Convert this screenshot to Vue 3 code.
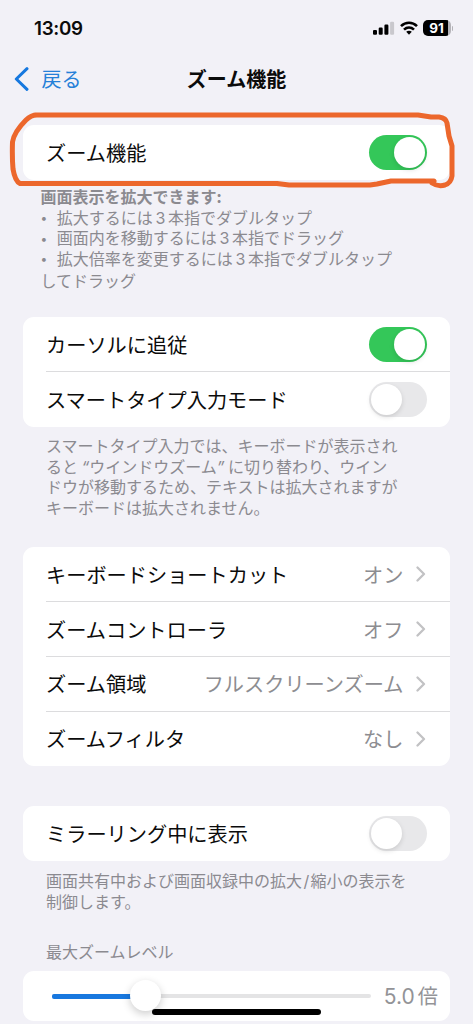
<script setup>
const shortcuts = [
  { label: 'キーボードショートカット', value: 'オン' },
  { label: 'ズームコントローラ', value: 'オフ' },
  { label: 'ズーム領域', value: 'フルスクリーンズーム' },
  { label: 'ズームフィルタ', value: 'なし' },
]
const follow = [
  { label: 'カーソルに追従', on: true },
  { label: 'スマートタイプ入力モード', on: false },
]
const tips = [
  ['拡大するには', '本指でダブルタップ'],
  ['画面内を移動するには', '本指でドラッグ'],
  ['拡大倍率を変更するには', '本指でダブルタップ'],
]
</script>

<template>
  <div class="screen">
    <header class="status">
      <span class="time">13:09</span>
      <div class="indicators">
        <svg class="signal" width="22" height="14" viewBox="0 0 22 14">
          <rect x="0" y="9" width="4" height="4.8" rx="1.1" />
          <rect x="5.7" y="6.6" width="4" height="7.2" rx="1.1" />
          <rect x="11.4" y="3.6" width="4" height="10.2" rx="1.1" />
          <rect x="17.1" y="0.8" width="4" height="13" rx="1.1" fill="#c9c8cd" />
        </svg>
        <svg class="wifi" width="18" height="14" viewBox="0 0 18 14">
          <g fill="none" stroke="#000" stroke-width="2.6">
            <path d="M1 5.1C5.6.7 12.4.7 17 5.1" />
            <path d="M4 8.6C6.9 5.9 11.1 5.9 14 8.6" />
          </g>
          <path d="M6.2 10.8C7.8 9.4 10.2 9.4 11.8 10.8L9 13.8Z" />
        </svg>
        <div class="battery"><span class="level">91</span><i class="cap"></i></div>
      </div>
    </header>

    <nav class="nav">
      <div class="back">
        <svg width="15" height="24" viewBox="0 0 15 24">
          <path d="M13 1.7L2.3 12L13 22.3" fill="none" stroke="#1678df" stroke-width="3" stroke-linecap="round" stroke-linejoin="round" />
        </svg>
        <span>戻る</span>
      </div>
      <h1>ズーム機能</h1>
    </nav>

    <section class="card master">
      <div class="row"><span>ズーム機能</span><i class="switch on"></i></div>
    </section>
    <div class="note tips">
      <b>画面表示を拡大できます:</b>
      <p v-for="tip in tips" :key="tip[0]"><span class="dot">•</span>{{ tip[0] }}<span class="num">3</span>{{ tip[1] }}</p>
      <p>してドラッグ</p>
    </div>

    <section class="card follow">
      <div v-for="item in follow" :key="item.label" class="row">
        <span>{{ item.label }}</span><i class="switch" :class="{ on: item.on }"></i>
      </div>
    </section>
    <div class="note smart">
      <p>スマートタイプ入力では、キーボードが表示され</p>
      <p>ると<span class="quote open">“</span>ウインドウズーム<span class="quote close">”</span>に切り替わり、ウイン</p>
      <p>ドウが移動するため、テキストは拡大されますが</p>
      <p>キーボードは拡大されません。</p>
    </div>

    <section class="card links">
      <div v-for="item in shortcuts" :key="item.label" class="row">
        <span>{{ item.label }}</span>
        <span class="value">{{ item.value }}</span>
        <svg class="chevron" width="10" height="16" viewBox="0 0 10 16">
          <path d="M1.5 1.5L8 8L1.5 14.5" fill="none" stroke="#c2c2c4" stroke-width="2.3" stroke-linecap="round" stroke-linejoin="round" />
        </svg>
      </div>
    </section>

    <section class="card mirror">
      <div class="row"><span>ミラーリング中に表示</span><i class="switch"></i></div>
    </section>
    <div class="note mirror-note">
      <p>画面共有中および画面収録中の拡大<span class="slash">/</span>縮小の表示を</p>
      <p>制御します。</p>
    </div>

    <h2>最大ズームレベル</h2>
    <section class="card level-card">
      <div class="track"><i class="fill"></i><i class="knob"></i></div>
      <span class="amount"><span class="digits">5.0</span>倍</span>
    </section>

    <svg class="marker" width="473" height="200" viewBox="0 0 473 200">
      <path d="M35 115H418L431 117H439Q446 118 447 123L449 136L452 146V176Q451 183 445 185Q438 187 432 183L434 181H391L377 184L370 185H289L277 183.500H20Q15 181 13 169Q12 157 12.500 142Q14 132 26 120Q31 115 37 115" />
    </svg>
    <i class="home"></i>
  </div>
</template>

<style>
body {
  background: #f2f1f7;
}
</style>

<style scoped>
.screen {
  position: relative;
  box-sizing: border-box;
  width: 473px;
  height: 1024px;
  overflow: hidden;
  background: #f2f1f7;
  color: #0b0b0b;
  font-family: "Noto Sans CJK JP", sans-serif;
  font-size: 20.2px;
}
p, h1, h2 {
  margin: 0;
}
i {
  display: block;
  font-style: normal;
}
.status {
  display: flex;
  justify-content: space-between;
  align-items: center;
  height: 56px;
  padding: 0 20px 0 34px;
  font-family: Inter, sans-serif;
}
.time {
  font-size: 18.8px;
  font-weight: 600;
  letter-spacing: -0.3px;
}
.indicators {
  display: flex;
  align-items: center;
}
.wifi {
  margin-left: 5px;
}
.battery {
  display: flex;
  align-items: center;
  margin-left: 5px;
}
.level {
  width: 28px;
  height: 16px;
  border-radius: 5px;
  background: linear-gradient(90deg, #000 25.5px, #b4b3b8 25.5px);
  color: #fff;
  font-size: 13.5px;
  font-weight: 700;
  line-height: 16px;
  text-align: center;
}
.cap {
  width: 1.5px;
  height: 5px;
  margin-left: 1px;
  border-radius: 0 2px 2px 0;
  background: #b4b3b8;
}
.nav {
  display: grid;
  grid-template-columns: 1fr auto 1fr;
  align-items: center;
  height: 46px;
  padding: 0 14px;
}
.back {
  display: flex;
  align-items: center;
  gap: 12.5px;
  color: #2580d8;
  font-size: 20px;
  line-height: 28px;
}
h1 {
  font-size: 20px;
  font-weight: 700;
  line-height: 30px;
}
.card {
  width: 427px;
  margin-left: 23px;
  border-radius: 11px;
  background: #fff;
}
.row {
  position: relative;
  display: flex;
  align-items: center;
  height: 54.8px;
  padding: 0 23px;
}
.row > span:first-child {
  flex: 1;
}
.row + .row::before {
  content: "";
  position: absolute;
  top: -0.5px;
  right: 0;
  left: 23px;
  height: 1px;
  background: #dcdcde;
}
.master {
  margin-top: 23px;
}
.master .row {
  height: 55px;
}
.switch {
  width: 58px;
  height: 35px;
  border-radius: 18px;
  background: #e8e8ea;
}
.switch::after {
  content: "";
  display: block;
  width: 31px;
  height: 31px;
  margin: 2px;
  border-radius: 50%;
  background: #fff;
  box-shadow: 0 2px 5px rgba(0, 0, 0, 0.13);
  float: left;
}
.switch.on {
  background: #34c759;
}
.switch.on::after {
  float: right;
}
.note {
  color: #8b8a90;
  font-size: 16px;
  line-height: 20.6px;
  white-space: nowrap;
}
.note p {
  height: 20.6px;
}
.tips {
  height: 131px;
  padding: 6px 0 0 40.5px;
  box-sizing: border-box;
}
.tips b {
  display: block;
  height: 20.6px;
  font-weight: 700;
}
.tips p:last-child {
  padding-top: 1.5px;
}
.dot {
  display: inline-block;
  width: 16.3px;
  font-family: Inter, sans-serif;
  font-size: 12px;
  line-height: 1;
  vertical-align: 1.5px;
}
.num {
  display: inline-block;
  width: 15.3px;
  font-family: Inter, sans-serif;
  line-height: 1;
  text-align: center;
}
.follow {
  margin-top: 6px;
}
.smart {
  height: 120.4px;
  padding: 8.5px 0 0 46px;
  box-sizing: border-box;
}
.quote {
  display: inline-block;
  width: 11.2px;
  font-family: Inter, sans-serif;
  font-style: italic;
  line-height: 1;
}
.open {
  text-align: right;
}
.value {
  color: #8d8d91;
}
.chevron {
  margin: 0 1px 0 12.5px;
}
.mirror {
  margin-top: 40px;
}
.mirror-note {
  padding: 9.5px 0 0 46px;
}
.slash {
  display: inline-block;
  width: 8.5px;
  font-family: Inter, sans-serif;
  line-height: 1;
  text-align: center;
}
h2 {
  margin: 29.3px 0 0 46px;
  color: #8b8a90;
  font-size: 16px;
  font-weight: 400;
  line-height: 20px;
}
.level-card {
  display: flex;
  align-items: center;
  justify-content: space-between;
  box-sizing: border-box;
  height: 50px;
  margin-top: 9.7px;
  padding: 0 12px 0 29px;
}
.track {
  position: relative;
  width: 319px;
  height: 4px;
  border-radius: 2px;
  background: #e4e4e5;
}
.fill {
  width: 93px;
  height: 5px;
  border-radius: 2px;
  background: #1878df;
}
.knob {
  position: absolute;
  top: -14px;
  left: 78px;
  width: 31px;
  height: 31px;
  border-radius: 50%;
  background: #fff;
  box-shadow: 0 3px 8px rgba(0, 0, 0, 0.2);
}
.amount {
  color: #939397;
}
.digits {
  margin-right: 3px;
  font-family: Inter, sans-serif;
  font-size: 21px;
}
.marker {
  position: absolute;
  top: 0;
  left: 0;
}
.marker path {
  fill: none;
  stroke: #ec672c;
  stroke-width: 5;
  stroke-linecap: round;
  stroke-linejoin: round;
}
.home {
  position: absolute;
  top: 1009px;
  left: 152px;
  width: 169px;
  height: 6px;
  border-radius: 3px;
  background: #000;
}
</style>
